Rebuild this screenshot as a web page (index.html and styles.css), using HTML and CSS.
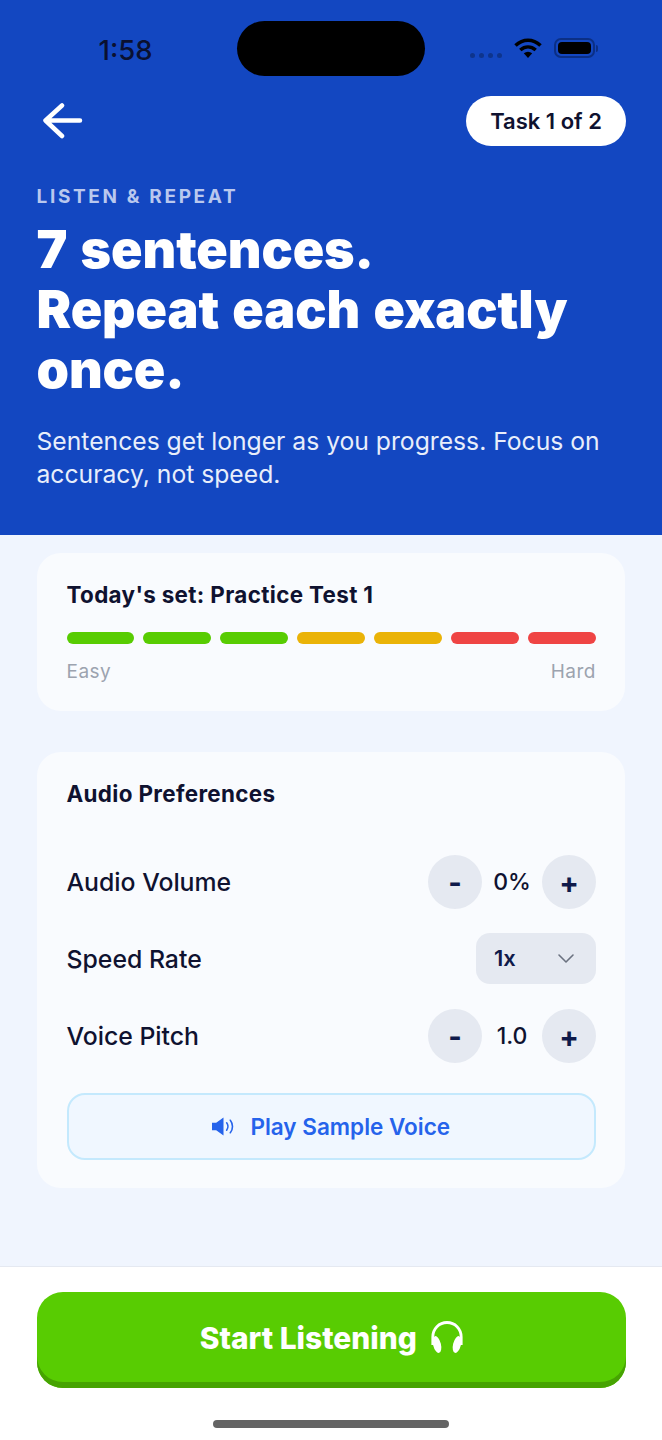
FILE: index.html
```html
<!DOCTYPE html>
<html lang="en">
<head>
<meta charset="utf-8">
<title>Listen &amp; Repeat</title>
<link rel="stylesheet" href="styles.css">
</head>
<body>
<div class="screen">
  <header class="hero">
    <div class="status">
      <span class="time">1:58</span>
      <span class="island"></span>
      <span class="status-icons">
        <span class="signal"><i></i><i></i><i></i><i></i></span>
        <svg class="wifi" width="28" height="20" viewBox="0 0 28 20"><path d="M1.500 7.500C9 .5 19 .5 26.500 7.500" fill="none" stroke="#000" stroke-width="3.600"/><path d="M6.300 12C11 8 17 8 21.700 12" fill="none" stroke="#000" stroke-width="3.600"/><path d="M9.800 15.200C12.500 13.200 15.500 13.200 18.200 15.200L14 20Z" fill="#000"/></svg>
        <span class="battery"><span class="battery-fill"></span></span>
        <span class="battery-cap"></span>
      </span>
    </div>
    <div class="nav">
      <svg class="back" width="40" height="38" viewBox="0 0 40 38"><path d="M37 18.500H3M19 3.500L2.500 18.500L19 34" fill="none" stroke="#fff" stroke-width="4.500" stroke-linecap="round" stroke-linejoin="round"/></svg>
      <span class="pill">Task 1 of 2</span>
    </div>
    <p class="eyebrow">LISTEN &amp; REPEAT</p>
    <h1 class="title">7 sentences.<br>Repeat each exactly once.</h1>
    <p class="sub">Sentences get longer as you progress. Focus on accuracy, not speed.</p>
  </header>

  <main class="content">
    <section class="card set-card">
      <h2 class="card-title">Today's set: Practice Test 1</h2>
      <div class="segments">
        <span class="seg green"></span><span class="seg green"></span><span class="seg green"></span>
        <span class="seg amber"></span><span class="seg amber"></span>
        <span class="seg red"></span><span class="seg red"></span>
      </div>
      <div class="scale"><span>Easy</span><span>Hard</span></div>
    </section>

    <section class="card audio-card">
      <h2 class="card-title">Audio Preferences</h2>
      <div class="rows">
        <div class="row">
          <span class="row-label">Audio Volume</span>
          <div class="stepper"><span class="round">-</span><span class="val">0%</span><span class="round">+</span></div>
        </div>
        <div class="row">
          <span class="row-label">Speed Rate</span>
          <div class="select"><span>1x</span>
            <svg width="18" height="11" viewBox="0 0 18 11"><path d="M2 2L9 9L16 2" fill="none" stroke="#6b7280" stroke-width="1.600" stroke-linecap="round" stroke-linejoin="round"/></svg>
          </div>
        </div>
        <div class="row">
          <span class="row-label">Voice Pitch</span>
          <div class="stepper"><span class="round">-</span><span class="val">1.0</span><span class="round">+</span></div>
        </div>
      </div>
      <div class="sample">
        <svg width="23" height="19" viewBox="0 0 22 18"><path d="M0 5.500H4L11 .5V17.500L4 12.500H0Z" fill="#2563eb"/><path d="M14 5.500C15.500 7.500 15.500 10.500 14 12.500M17.500 3C20.300 6.500 20.300 11.500 17.500 15" fill="none" stroke="#2563eb" stroke-width="1.500" stroke-linecap="round"/></svg>
        <span>Play Sample Voice</span>
      </div>
    </section>
  </main>

  <footer class="footer">
    <div class="cta">
      <span>Start Listening</span>
      <svg width="32" height="33" viewBox="0 0 32 33"><path d="M1.800 24V16C1.800 7.800 8 1.500 16 1.500S30.200 7.800 30.200 16V24" fill="none" stroke="#fff" stroke-width="2.800"/><ellipse cx="6" cy="23.500" rx="3.900" ry="8.600" transform="rotate(-14 6 23.500)" fill="#fff"/><ellipse cx="26" cy="23.500" rx="3.900" ry="8.600" transform="rotate(14 26 23.500)" fill="#fff"/></svg>
    </div>
    <div class="home"></div>
  </footer>
</div>
</body>
</html>
```
FILE: styles.css
```css
* { box-sizing: border-box; }
html, body { margin: 0; padding: 0; }
body { font-family: Inter, "Liberation Sans", sans-serif; color: #0f1230; background: #f0f5fe; }
.screen { width: 662px; height: 1440px; display: flex; flex-direction: column; overflow: hidden; }

.hero { height: 535px; background: #1347c1; padding: 21px 36px 0 36.500px; color: #fff; flex: none; }
.status { height: 75px; display: flex; align-items: flex-start; position: relative; }
.time { width: 200.500px; padding: 14px 0 0 62px; font-size: 27.500px; font-weight: 500; color: #0a1030; line-height: 30px; }
.island { width: 188px; height: 55px; border-radius: 28px; background: #000; }
.status-icons { display: flex; align-items: center; margin-left: 45px; margin-top: 17px; height: 20px; }
.signal { display: flex; gap: 4px; margin-top: 15px; margin-right: 12px; }
.signal i { width: 5px; height: 5px; border-radius: 50%; background: #0e348c; }
.wifi { margin-right: 12px; }
.battery { width: 41px; height: 20px; border: 2px solid #0b2f85; border-radius: 7px; padding: 2px; display: flex; flex: none; }
.battery-fill { flex: 1; background: #000; border-radius: 4px; }
.battery-cap { width: 2px; height: 7px; margin-left: 1px; background: #0b2f85; border-radius: 0 2px 2px 0; flex: none; }

.nav { height: 50px; display: flex; align-items: center; justify-content: space-between; padding-left: 6px; }
.pill { width: 160px; height: 50px; border-radius: 25px; background: #fff; color: #0f1230; font-size: 22px; font-weight: 600; display: flex; align-items: center; justify-content: center; }

.eyebrow { margin: 38px 0 0; font-size: 19px; line-height: 26px; font-weight: 700; letter-spacing: 2.650px; color: #b9c8ee; }
.title { margin: 10px 0 0; font-size: 52px; line-height: 60px; font-weight: 900; color: #fff; letter-spacing: -0.100px; word-spacing: 3px; }
.sub { margin: 25px 0 0; font-size: 24.700px; line-height: 33px; font-weight: 400; color: #e8eefb; }

.content { flex: 1; padding: 18px 37px 0 36.500px; display: flex; flex-direction: column; gap: 41px; }
.card { background: #f9fbfe; border-radius: 24px; padding: 0 29px 0 30px; }
.set-card { height: 158px; padding-top: 28px; }
.audio-card { height: 436px; padding-top: 28px; }
.card-title { margin: 0; font-size: 22.400px; line-height: 28px; font-weight: 700; color: #0f1230; letter-spacing: 0.350px; }
.segments { display: flex; gap: 9px; margin-top: 23px; }
.seg { flex: 1; height: 12px; border-radius: 6px; }
.green { background: #58cc02; }
.amber { background: #eab308; }
.red { background: #ef4444; }
.scale { display: flex; justify-content: space-between; margin-top: 16px; font-size: 19px; line-height: 24px; color: #9ca3af; letter-spacing: 0.500px; }

.rows { margin-top: 47px; display: flex; flex-direction: column; gap: 23px; }
.row { display: flex; align-items: center; justify-content: space-between; height: 54px; }
.row-label { font-size: 24.800px; font-weight: 450; color: #0f1230; }
.stepper { display: flex; align-items: center; }
.round { width: 54px; height: 54px; border-radius: 50%; background: #e5e9f1; display: flex; align-items: center; justify-content: center; font-size: 29px; font-weight: 700; color: #0f1a4a; }
.val { width: 60px; text-align: center; font-size: 23px; font-weight: 500; color: #0f1230; }
.select { width: 120px; height: 51px; margin-bottom: 2px; border-radius: 14px; background: #e5e9f1; display: flex; align-items: center; justify-content: space-between; padding: 0 21px 0 18px; font-size: 22px; font-weight: 600; color: #0f1a4a; }
.sample { margin-top: 30px; height: 67px; border: 2px solid #c4e9fd; border-radius: 18px; background: #f0f7ff; display: flex; align-items: center; justify-content: center; gap: 15px; color: #2563eb; font-size: 22.500px; font-weight: 600; }

.footer { height: 174px; flex: none; background: #fff; border-top: 1px solid #e5e9f1; padding: 25px 36px 0 36.500px; display: flex; flex-direction: column; align-items: center; }
.cta { width: 100%; height: 96px; border-radius: 26px; background: #58cc02; box-shadow: inset 0 -6px 0 #46a302; display: flex; align-items: center; justify-content: center; gap: 14px; color: #fff; font-size: 29.900px; font-weight: 800; padding-bottom: 5px; }
.home { width: 236px; height: 8px; border-radius: 4px; background: #646464; margin-top: 32px; }
```
